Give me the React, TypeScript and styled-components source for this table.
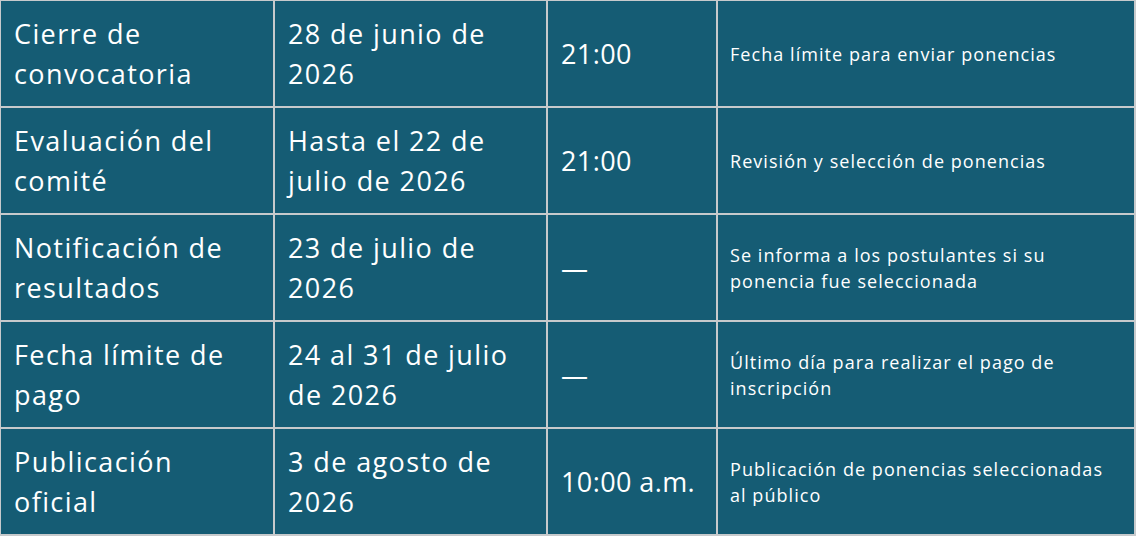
import React from "react";
import styled, { createGlobalStyle, css } from "styled-components";

const Global = createGlobalStyle`
  html, body { margin: 0; padding: 0; background: #ffffff; }
  body { font-family: "Open Sans", "Noto Sans", Arial, sans-serif; }
`;

const Table = styled.div`
  display: grid;
  grid-template-columns: 272px 271px 168px 416px;
  grid-auto-rows: 105px;
  gap: 2px;
  width: 1136px;
  box-sizing: border-box;
  padding: 1px 2px 2px 1px;
  background: #c7cacc;
`;

const Row = styled.div`
  display: contents;
`;

type Kind = "text" | "time" | "note";

const Cell = styled.div<{ $kind: Kind }>`
  display: flex;
  align-items: center;
  box-sizing: border-box;
  padding: 0 18px 0 13px;
  background: #155c74;
  color: #ffffff;
  font-family: "Open Sans", "Noto Sans", Arial, sans-serif;
  font-weight: 400;
  font-size: 27px;
  line-height: 40px;
  letter-spacing: 1.4px;
  ${(p) =>
    p.$kind === "time" &&
    css`
      white-space: nowrap;
      letter-spacing: 0.4px;
    `}
  ${(p) =>
    p.$kind === "note" &&
    css`
      padding: 0 20px 0 12px;
      font-size: 18px;
      line-height: 26px;
      letter-spacing: 1.05px;
    `}
`;

type Item = { event: string; date: string; time: string; note: string };

const items: Item[] = [
  { event: "Cierre de convocatoria", date: "28 de junio de 2026", time: "21:00", note: "Fecha límite para enviar ponencias" },
  { event: "Evaluación del comité", date: "Hasta el 22 de julio de 2026", time: "21:00", note: "Revisión y selección de ponencias" },
  { event: "Notificación de resultados", date: "23 de julio de 2026", time: "—", note: "Se informa a los postulantes si su ponencia fue seleccionada" },
  { event: "Fecha límite de pago", date: "24 al 31 de julio de 2026", time: "—", note: "Último día para realizar el pago de inscripción" },
  { event: "Publicación oficial", date: "3 de agosto de 2026", time: "10:00 a.m.", note: "Publicación de ponencias seleccionadas al público" },
];

export default function App() {
  return (
    <>
      <Global />
      <Table role="table">
        {items.map((it) => (
          <Row role="row" key={it.event}>
            <Cell role="cell" $kind="text">{it.event}</Cell>
            <Cell role="cell" $kind="text">{it.date}</Cell>
            <Cell role="cell" $kind="time">{it.time}</Cell>
            <Cell role="cell" $kind="note">{it.note}</Cell>
          </Row>
        ))}
      </Table>
    </>
  );
}
